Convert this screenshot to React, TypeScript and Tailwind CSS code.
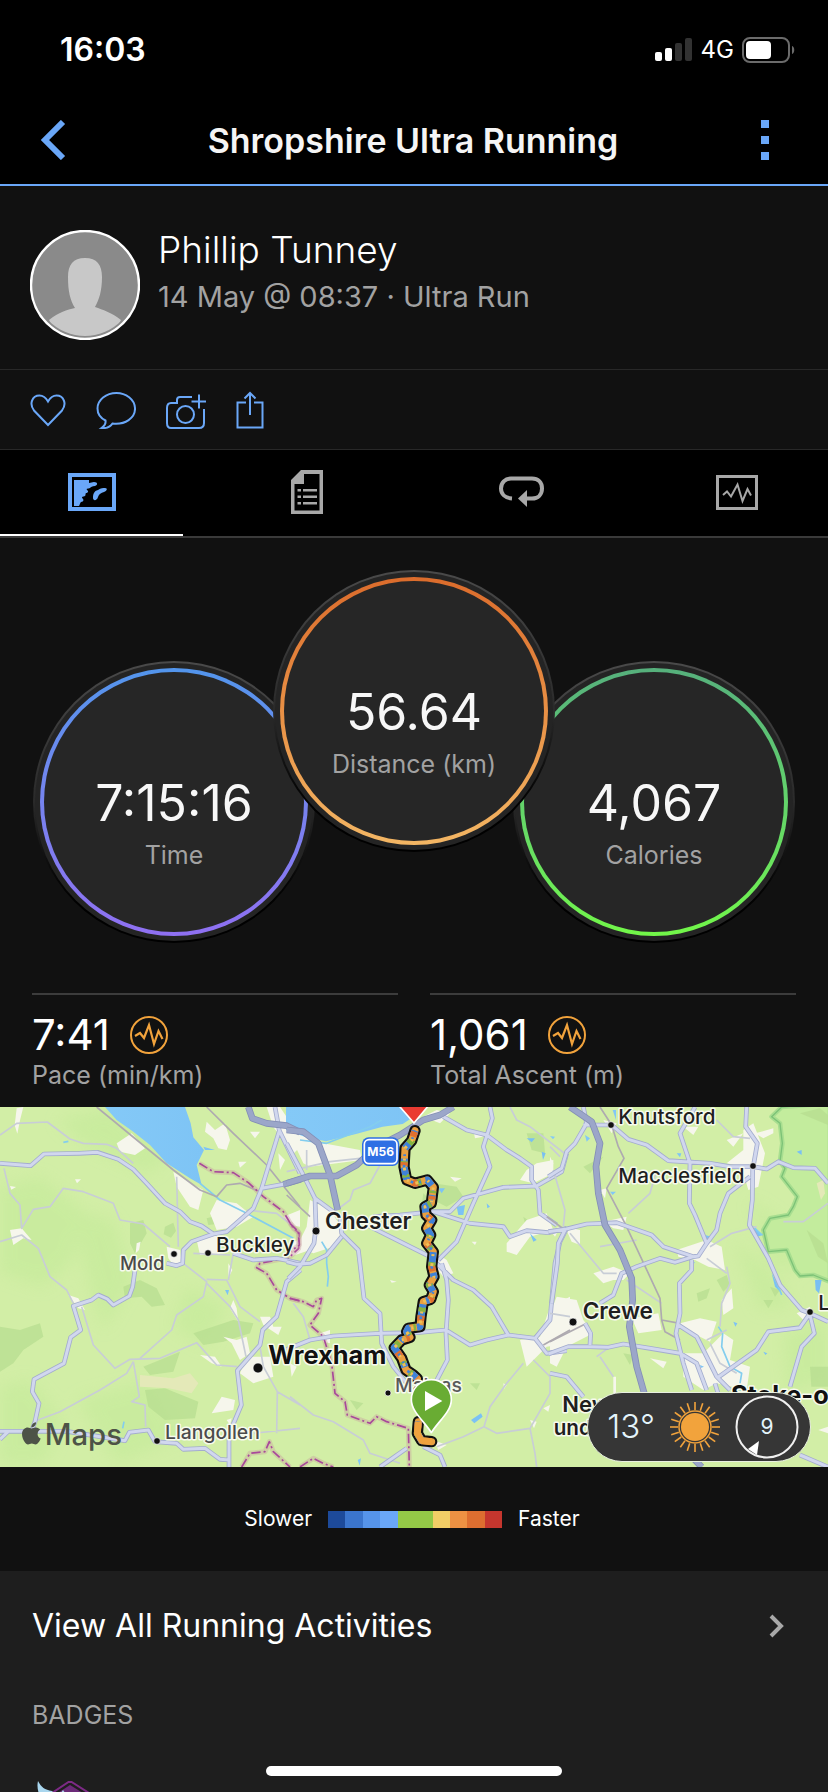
import type { ReactNode } from "react";
import { FaApple } from "react-icons/fa";

const ACCENT = "#6aa7f8";

function StatusBar() {
  return (
    <div className="flex h-[100px] items-center justify-between bg-black pr-8 pl-[60px]">
      <span className="text-[32px] font-semibold">16:03</span>
      <div className="flex items-center gap-2">
        <svg width="38" height="24" viewBox="0 0 38 24" fill="#fff">
          <rect x="0" y="14" width="7" height="9" rx="2" />
          <rect x="10" y="10" width="7" height="13" rx="2" />
          <rect x="20" y="5" width="7" height="18" rx="2" fill="#323232" />
          <rect x="30" y="0" width="7" height="23" rx="2" fill="#323232" />
        </svg>
        <span className="text-2xl">4G</span>
        <svg width="54" height="26" viewBox="0 0 54 26" fill="none">
          <rect x="1" y="1" width="46" height="24" rx="7" stroke="#6b6b6b" strokeWidth="2" />
          <rect x="4" y="4" width="25" height="18" rx="4" fill="#fff" />
          <path d="M50 9c3 1 3 7 0 8z" fill="#6b6b6b" />
        </svg>
      </div>
    </div>
  );
}

function NavBar() {
  return (
    <header className="flex h-[86px] items-center justify-between border-b-2 border-[#6aa7f8] bg-black pr-[58px] pb-1 pl-10">
      <button type="button" aria-label="Back">
        <svg width="26" height="40" viewBox="0 0 26 40" fill="none" stroke={ACCENT} strokeWidth="6">
          <path d="M23 2 5 20l18 18" />
        </svg>
      </button>
      <h1 className="text-[34px] font-semibold text-[#f5f5f5]">Shropshire Ultra Running</h1>
      <button type="button" aria-label="More options">
        <svg width="10" height="40" viewBox="0 0 10 40" fill={ACCENT}>
          <path d="M1 0h8v8H1zM1 16h8v8H1zM1 32h8v8H1z" />
        </svg>
      </button>
    </header>
  );
}

function Profile() {
  return (
    <section className="flex gap-[18px] border-b border-[#282828] px-[30px] pt-11 pb-[29px]">
      <svg className="shrink-0" width="110" height="110" viewBox="0 0 110 110">
        <defs>
          <clipPath id="avatar">
            <circle cx="55" cy="55" r="51" />
          </clipPath>
        </defs>
        <circle cx="55" cy="55" r="54" fill="#8a8a8a" stroke="#fff" strokeWidth="2.4" />
        <g clipPath="url(#avatar)" fill="#c8c8c8">
          <path d="M38 47c0-12 5-19 17-19s17 7 17 19c0 14-3 23-7 30 8 3 16 5 26 13l-10 20H29L19 90c10-8 18-10 26-12-5-8-7-17-7-31z" />
        </g>
      </svg>
      <div>
        <p className="text-[37px] leading-10 font-light text-white">Phillip Tunney</p>
        <p className="text-[29px] leading-[54px] text-[#a2a2a2]">14 May @ 08:37 · Ultra Run</p>
      </div>
    </section>
  );
}

function Actions() {
  return (
    <div className="flex h-20 items-center gap-[30px] border-b border-[#282828] px-[30px]">
      <button type="button" aria-label="Like">
        <svg width="36" height="38" viewBox="0 0 36 38" fill="none" stroke={ACCENT} strokeWidth="2">
          <path d="M18 34 4 19.500C-1 13 2 4.500 9.500 4.500c4 0 6.500 2.500 8.500 6 2-3.500 4.500-6 8.500-6C34 4.500 37 13 32 19.500z" />
        </svg>
      </button>
      <button type="button" aria-label="Comment">
        <svg width="40" height="38" viewBox="0 0 40 38" fill="none" stroke={ACCENT} strokeWidth="2">
          <path d="M20.500 2C10 2 1.500 9 1.500 17.500c0 5 3 9.500 8 12 .5 3-1 5.500-4 7.500 5 .5 9-1.500 11-4.500C29 34 39.500 27 39 17 38.500 8.500 30 2 20.500 2z" />
        </svg>
      </button>
      <button type="button" aria-label="Add photo">
        <svg width="40" height="38" viewBox="1 0 40 38" fill="none" stroke={ACCENT} strokeWidth="2">
          <path d="M27 6H15c-2 0-3 1-3 3v3H6c-3 0-4 2-4 5v15c0 3 1 5 4 5h28c3 0 5-2 5-5V18" />
          <circle cx="20.500" cy="23.500" r="8.500" />
          <path d="M34 3.500v14M26.500 10.500H41" />
        </svg>
      </button>
      <button type="button" aria-label="Share">
        <svg width="28" height="38" viewBox="0 0 28 38" fill="none" stroke={ACCENT} strokeWidth="2">
          <path d="M10 11.500H1.500v25h25v-25H18M14 24V2M8.500 7.500 14 2l5.500 5.500" />
        </svg>
      </button>
    </div>
  );
}

const tabs: { name: string; icon: ReactNode }[] = [
  {
    name: "Map",
    icon: (
      <svg width="48" height="38" viewBox="0 0 48 38" fill={ACCENT}>
        <rect x="2" y="2" width="44" height="34" fill="none" stroke={ACCENT} strokeWidth="4" />
        <path d="M6 7h15v3c2 0 3-1 5-1 4 0 4 3 1 4-3 0-4 1-5 2-2 1-4 0-3 2 2 1 1 3-1 3-1 1 0 2-1 3-2 1-3 0-3 2 2 1 2 4-1 4-1 1-1 2-2 4H6z" />
        <path d="M25 25c0-4 1-7 5-8 3-2 5-2 7-2 3 0 2 3-1 4-3 1-5 2-6 5-1 4-5 4-5 1z" />
      </svg>
    ),
  },
  {
    name: "Stats",
    icon: (
      <svg width="32" height="44" viewBox="0 0 32 44" fill="#a8a8a8">
        <path d="M10 0h22v44H0V10zm3 4v10H3.500v26.500h25V4z" fillRule="evenodd" />
        <path d="M12 19h14v2.500H12zM12 25.500h14V28H12zM12 32h14v2.500H12zM6.500 19H10v2.500H6.500zM6.500 25.500H10V28H6.500zM6.500 32H10v2.500H6.500z" />
      </svg>
    ),
  },
  {
    name: "Laps",
    icon: (
      <svg width="45" height="32" viewBox="0 0 45 32" fill="none">
        <path d="M13 22.500C6 22 2 18 2 12.500S6 2.500 12 2.500h21c6 0 10 4 10 10s-4 10-10 10h-5" stroke="#a8a8a8" strokeWidth="4" />
        <path d="M28 14v17l-9-8.500z" fill="#a8a8a8" />
      </svg>
    ),
  },
  {
    name: "Charts",
    icon: (
      <svg width="42" height="35" viewBox="0 0 42 35" fill="none" stroke="#a8a8a8">
        <rect x="1.500" y="1.500" width="39" height="32" strokeWidth="3" />
        <path d="m7 20 4-3.500 4 5 6.500-12 5 16.500 5-12 3.500 6.500" strokeWidth="2" />
      </svg>
    ),
  },
];

function Tabs() {
  return (
    <div role="tablist" className="grid h-[88px] grid-cols-4 gap-8 border-b-2 border-[#3a3a3a] bg-black">
      {tabs.map((tab, i) => (
        <button
          key={tab.name}
          type="button"
          role="tab"
          aria-label={tab.name}
          aria-selected={i === 0}
          className={`flex items-center justify-center border-b-2 ${i === 0 ? "border-white" : "border-transparent"}`}
        >
          {tab.icon}
        </button>
      ))}
    </div>
  );
}

function Dial({ value, label, ring, className }: { value: string; label: string; ring: string; className: string }) {
  return (
    <div className={`size-[282px] shrink-0 rounded-full bg-linear-to-b from-[#4a4a4a] via-[#2a2a2a] to-black p-0.5 ${className}`}>
      <div className="size-full rounded-full bg-[#242424] p-[5px]">
        <div className={`size-full rounded-full bg-linear-to-b p-1 ${ring}`}>
          <div className="flex size-full flex-col items-center rounded-full bg-[#262626] pt-[103px]">
            <span className="text-[50px] leading-14 text-[#f7f7f7]">{value}</span>
            <span className="text-[25px] leading-12 text-[#a2a2a2]">{label}</span>
          </div>
        </div>
      </div>
    </div>
  );
}

function Dials() {
  return (
    <section className="flex justify-center pt-8">
      <Dial value="7:15:16" label="Time" ring="from-[#5295ec] to-[#8f70f2]" className="mt-[91px]" />
      <Dial value="56.64" label="Distance (km)" ring="from-[#db6c2c] via-[#e89045] to-[#f3b664]" className="z-10 -mx-[42px]" />
      <Dial value="4,067" label="Calories" ring="from-[#56b07c] to-[#72f748]" className="mt-[91px]" />
    </section>
  );
}

function Stat({ value, label }: { value: string; label: string }) {
  return (
    <div className="border-t-2 border-[#3c3c3c] pt-4">
      <div className="flex h-12 items-center gap-5">
        <span className="text-[42px] leading-12 text-white">{value}</span>
        <svg width="38" height="38" viewBox="0 0 38 38" fill="none" stroke="#f2a33c">
          <circle cx="19" cy="19" r="18" strokeWidth="2" />
          <path d="m5 20 5-3 4 5 5-13 5 19 4.500-13 4 8" strokeWidth="2.200" />
        </svg>
      </div>
      <p className="text-[25px] leading-8 text-[#a2a2a2]">{label}</p>
    </div>
  );
}

// Map geometry is kept in three tiles that share one 2484x1080 canvas.
const tiles = [
  {
    x: 0,
    forest:
      "M0 680 60 690 120 670 130 710 70 750 40 790 0 815zM390 370l40-10 10 40-35 60-15-30zM370 560l50-20 50 25 25 50-40 5-30-30-50 5zM435 870l60-5 100 40-10 50-90 5-50-40zM430 800l110-45-20 60-70 10zM495 380l25-12 8 25-15 20-22-10zM580 700l120-40 60 10-10 30-80 25-60 10zM620 355l60-15-10 30-45 5z",
    sand: "M420 825l100 10 50-15 25 30-20 30-70-15-85-5z",
    towns:
      "M350 130l45-30 40 45-30 20-45-10zM520 215l45 30 45 25-15 60-25-10-40-60zM620 65l25 25 30-20 15 50-10 30-25-5-15-30-25-20zM650 300l60 10 50 40-50 30-60 10-20-50zM30 390l35-5 30 35-25-5-30 20zM205 585l30 10 20 35-20-5zM670 710l40 10 30-10 10 50-30 20-25-50zM780 650l30 0 10 30 25 0-10 25-45-30zM740 770l70 0 10 60-60 20-40-30zM635 940l30-50 40 10-5 30zM500 440l40 10 5 40-25 5-15-20zM600 765l45 5 20 30-30-10zM800 21h40l40 60 20 60-20 20-60-80zM850 350l50-20v50l-30-5zM590 420l60-15 10 60-60 0zM50 25l20-4-10 40-8 40-8-25zM410 430l12-5-5 25-10 10zM750 95l30 0-15 20zM715 185l25 0-20 18zM30 258l18 3-14 8zM225 238l18 0-12 12zM685 490l12 20-12 25zM700 600l10 25 5 40-25-40zM835 160l20 20-15 30zM680 960l15-5-5 20z",
    water:
      "M315 21 350 60 400 95 450 135 500 190 570 235 605 255 590 195 612 150 580 112 572 70 555 21zM610 140l35 10-30 0zM675 570l12 0-4 16zM860 21 900 75V21z",
    motorway: "M745 21 757 55 800 70 860 77 900 97M850 253 902 238",
    major:
      "M0 190 92 197 132 162 238 160 292 157 355 178 400 208 440 250 495 310 540 335 570 365 605 378 640 402 680 395 760 325 785 265 838 92 825 21M838 92 900 220M785 265 850 253M640 402 575 425 550 450 548 490 530 497 500 490M405 510 398 560 388 588 340 615 322 597 295 585 275 600 220 618 242 690 212 712 192 790 102 838 97 875 117 910 105 965 95 992M0 994H200L300 1010 375 1022 388 997 445 990 465 1025 530 1030 550 1048 615 1045 660 1078 687 1080M687 1101V1000L705 960 724 915 712 812 780 735 788 690 830 650 860 545 902 510M700 460 760 480 830 475 902 490M0 1018 25 994",
    minor:
      "M0 105 50 70 142 66 210 117 250 130 320 133 350 145 400 190M12 205 30 280 60 315 65 385 100 328 150 320 190 265 250 275 340 310 360 360 430 372 510 440M0 425 65 405 115 445 150 530 200 570 220 610M245 620 280 735 345 805 390 778 480 775 590 728 650 795 712 800M400 785 380 820 300 870 180 935 100 965M420 775 515 690 530 645 610 590 620 545 550 490M400 785 418 890 395 905 435 915 437 980M530 230 535 440M620 550 690 620 715 660 738 770M685 540 700 460M580 460 690 465M620 538 680 540 720 620 780 665M740 330 830 340 880 380M780 740 790 800 832 875 830 1000M832 875 900 915M760 1000 900 985",
    rail: "M290 21 520 210 600 270 650 290 680 255 720 250 780 275M620 21 700 100 800 195 900 320",
    border:
      "M598 190 640 215 700 218 745 248 790 290 850 335 880 385 898 400 896 445 860 480 840 478 780 490 770 503 800 520 830 570 870 595 900 603M725 1101 750 1060 795 1055 808 1025 820 1055 870 1101",
    river: "M600 250 660 300 740 340 880 415M372 965 368 985M190 127 205 124",
  },
  {
    x: 870,
    forest:
      "M430 250l70 10 20 30-50 30-40-20zM710 100l50 0 5 60-40-10zM700 350l40 30-30 10zM540 850l30 0-10 20zM60 110l30 30-20 50-30-20zM400 280l20 20-10 40-15-20zM180 900l40 10-20 20z",
    sand: "M385 1000l15 0-5 20z",
    towns:
      "M0 105 60 95 100 130 210 150 215 180 60 200 40 190zM60 300l60 30 40 60-30 50-60 20-50-20 30-60zM440 460l30 20 20 40-30 10-25-30zM650 430l60-70 60-20 20 50-70 20-40 55-30-10zM740 190l50-10 0 40-60 30-40-10 20-30zM780 620l60-30v140l-70 10-60 60-20-80 60-10zM90 700l30-10 0 40-20-5zM300 540l20 5-15 3zM480 230l35 5-20 10zM430 1020l40 15-25 15zM640 850l10 5-8 12zM720 960l20 5-8 20zM760 925l20-10-5 20zM0 430l50-20 10 40-60 20zM400 50l40-20 40 10-30 30zM550 90l30 20-25 5zM545 425l15 0-5 10zM0 790l20 10-15 30z",
    water:
      "M-12 21V90l60 22 60 12 90-22 80-22 60-8 60-40V21zM500 320l25-5-5 30-15 0zM710 115l25 0-10 12zM590 310l10 10-8 5zM445 265l20 0-10 15zM543 960l30-20 5 10-25 20zM720 400l20 20-10 5zM203 1080l10-5-4 22zM755 155l12 5-8 20z",
    motorway: "M-10 90 40 95 85 130 120 225 143 330M-10 250 60 228 140 228 200 195 260 140 330 105 400 60 450 45 490 21",
    major:
      "M-10 130 40 225 75 295 150 350 155 400 205 450 222 595 270 640 275 730 310 800 350 850M75 295 78 380 72 430 30 500-5 535M-10 485 20 493 60 490 110 465 155 410M230 375 300 410 420 470 450 500 490 540 550 570 605 620 655 705 735 715 770 760 830 752M250 350 330 345 430 335 480 335 520 295 640 262 740 258 815 215 830 160M430 335 540 370 640 380 660 410 710 392 775 398 830 385M600 21 607 55 580 140 600 200 550 310 500 425 445 480M460 50 530 90 590 105 650 150 690 175 725 200 725 240 745 270 750 340 800 375M455 490 470 540 475 600 468 700 472 780 430 860M-10 748 60 720 130 708 270 700 380 698 468 690 540 735 590 720 655 705M735 715 780 660 795 490 810 425 830 385M400 1040 450 1065 465 1101M270 1101 300 1080 350 1045",
    minor:
      "M-10 215 120 185 210 175 270 195 240 250 190 270 180 300 140 330M660 21 680 60 720 80 830 165M0 890 70 945 130 965 220 1020 240 1060 330 1090M440 1040 520 1010 582 980 600 920 650 850 700 790M582 980 620 1000 720 985 780 880 780 830 730 780M720 985 735 1060 740 1101M10 610 40 650 60 720M50 150 50 210",
    rail: "M-10 285 60 350M760 735 840 690",
    border:
      "M0 370 25 395 28 435 0 455M0 595 40 605 70 620 80 600 95 595 85 640 60 675 100 710 125 790 135 880 165 905 172 945 240 970 260 950 290 965 355 985 358 1101M30 1101 70 1075 100 1090 130 1101",
    river: "M95 425 110 450 110 490 115 530 112 560M275 60 240 80 110 130 30 120",
  },
  {
    x: 1650,
    forest:
      "M770 390l50 40 14 60-30-20zM440 580l40-15-10 30-25 10zM500 540l30-15 10 30-20 20zM750 40l60-15 24 20v30zM660 560l30 10-15 20zM220 760l30 5-10 30zM780 800l54 0v60l-50 0zM100 200l60-30-40 50zM640 600l30 0-15 25z",
    sand: "M800 250l20-10 5 40-12 20z",
    towns:
      "M380 450l90-30 45 20 10 70-50-10-40-20-50-10zM530 190l50-40 0-60 30-20 35 90-20 100-30 10-20-70zM160 365l70-15-10 40-30-5zM45 380l45 10 0 45-25-10zM130 520l60-20 50 20-20 20-30 0-30 10zM0 640l20-50 60 10 20 60 30 40-80 40-30 60-20-10zM515 600l30-35 5 60-30 20zM390 670l60-15 50 10-20 60-60-30zM400 760l60 0 60-60 30 20-10 60 60 20-10 70-90-20-40 20-60-40zM245 655l80-15 10 50-70 10zM740 640l40-20 10 40-30 0zM615 100l55-15 0 15-30 15zM400 80l45 0-15 25zM530 120l50-20-30 40zM0 390l30-10-15 30zM150 270l20-5-5 30zM590 450l10 60M300 775l50 10-10 20zM160 60l40 10-15 30zM190 830l8 0 0 60-8 0zM805 990l29-10v20zM0 170l10 20-10 40z",
    water:
      "M610 380l30 25-20 5zM665 520l30 60-20-20zM795 540l20 0-8 40-10-10zM380 160l14 0-4 12zM465 405l14 4-8 10zM188 30l10 0 0 30zM740 155l15-5 0 15zM550 665l12 5-6 10zM450 795l12 5-10 4zM0 108l15 2-6 8zM105 105l15 10-10 10zM180 275l18 0-10 10zM640 755l12 5-6 5zM420 485l15 2-8 10z",
    motorway: "M60 21 125 65 150 130 138 200 145 280 165 375 210 450 245 535 248 600 238 680 260 800 300 940 455 1101",
    major:
      "M-5 395 45 388 110 372 200 368 305 405 340 440 430 470 445 468 470 430 435 345 418 310 420 190 390 100 435 21M470 430 500 390 510 340 535 280 600 230M100 75 185 75 235 118 290 135 355 182 480 190 540 200 610 200 650 207 685 185 730 203 795 205 834 250M-5 230 35 205 50 155 75 130 110 70 100 21M590 21 587 80 622 130 608 210 607 300 598 375 655 475 690 555 755 630 780 640M430 470 375 487 330 475 260 500 215 520 190 585 150 610M425 480V510L388 550 390 640 378 700 400 790 425 870M385 675 440 710 470 770 500 830 540 870M-5 762 55 740 120 740 175 742 220 732 300 745 390 760 440 790 470 870M500 835 620 750 655 695 750 683 780 640 834 665M780 645 793 700 755 740 720 860M0 820 50 830 100 890M45 390 25 430 22 490 5 610M120 735 122 700 105 670M750 1065 834 1101M495 850 510 900",
    minor:
      "M0 140 30 170M10 210 45 330 40 380M60 400 160 520 200 520M500 60 550 110 600 115M700 365 760 365 834 310M530 500 540 550 515 610 510 680M470 475 530 520M150 770 190 830M140 770 180 740M545 400 620 380M480 440 545 400M230 540 335 610M235 340 300 280 320 210M0 640 60 650M480 730 510 790 560 820M150 440 260 420M470 720 530 690",
    rail: "M150 21 185 75 205 140 222 175 170 265 225 370 330 595 335 660 390 670M335 660 345 695 390 720M0 725 110 670M-10 350 45 390",
    border: "",
    river: "M505 680 518 700 515 740 540 800 575 820 570 850M670 520 695 585M610 380 635 405M550 865l25 5",
  },
];

const park =
  "M695 21 665 50 690 70 697 130 690 185 705 205 695 230 742 290 730 320 715 345 660 355 640 390 655 455 710 450 735 510 750 528 790 525 840 545V10z";

const route =
  "M375 92 365 122 345 145 342 200 350 240 375 250 412 240 430 262 424 310 405 320 408 345 425 360 410 385 422 405 410 430 430 455 425 500 432 530 418 555 430 575 422 598 400 605 393 650 390 680 355 685 350 695 360 712 335 720 313 743 335 775 348 810 370 825 382 836M385 965 382 1000 395 1022 425 1025";

const places = [
  { name: "Mold", x: 360, y: 509, size: 56, weight: 500, color: "#4b4b4b", dot: [522, 462, 10] },
  { name: "Buckley", x: 648, y: 457, size: 62, weight: 500, color: "#1f1f1f", dot: [624, 459, 10] },
  { name: "Llangollen", x: 495, y: 1018, size: 58, weight: 500, color: "#4b4b4b", dot: [471, 1023, 10] },
  { name: "Chester", x: 975, y: 387, size: 68, weight: 600, color: "#1f1f1f", dot: [948, 393, 12] },
  { name: "Wrexham", x: 805, y: 792, size: 76, weight: 700, color: "#111", dot: [774, 804, 15] },
  { name: "Malpas", x: 1185, y: 875, size: 58, weight: 500, color: "#5a5a5a", dot: [1164, 879, 9] },
  { name: "Knutsford", x: 1855, y: 71, size: 62, weight: 500, color: "#1f1f1f", dot: [1833, 75, 10] },
  { name: "Macclesfield", x: 1855, y: 248, size: 62, weight: 500, color: "#1f1f1f", dot: [2259, 198, 10] },
  { name: "Crewe", x: 1748, y: 657, size: 68, weight: 600, color: "#1f1f1f", dot: [1719, 666, 12] },
  { name: "Leek", x: 2455, y: 631, size: 62, weight: 500, color: "#1f1f1f", dot: [2430, 636, 10] },
  { name: "New", x: 1687, y: 935, size: 66, weight: 600, color: "#1f1f1f" },
  { name: "und", x: 1661, y: 1006, size: 62, weight: 600, color: "#1f1f1f" },
  { name: "Stoke-on", x: 2193, y: 912, size: 76, weight: 700, color: "#111" },
];

function ActivityMap() {
  return (
    <svg
      className="block h-[360px] w-full"
      viewBox="0 21 2484 1080"
      preserveAspectRatio="xMidYMid slice"
      strokeLinejoin="round"
      fill="none"
    >
      <defs>
        <linearGradient id="sea" x1="0" y1="0" x2="1" y2="0">
          <stop offset="0" stopColor="#84c9f7" />
          <stop offset="1" stopColor="#78bff3" />
        </linearGradient>
        <filter id="soft">
          <feGaussianBlur stdDeviation="22" />
        </filter>
      </defs>
      <rect y="21" width="2484" height="1080" fill="#d2eea6" />
      <g fill="#c6eb9b" filter="url(#soft)" opacity=".7">
        <path d="M0 260 120 230 250 330 220 480 130 560 0 520zM220 330l120 30 60 180-90 150-60-200zM0 860l90-20 100 120-60 130H0zM230 900l220-60 100 170-200 80zM330 21l-160 40 80 70 200 90 60-60zM560 560l120 60-60 120-100-60zM2250 300l90 60 60 160-90-30zM2200 420l120 100 60 100-100 10zM2350 700l134-40v180l-120 40z" />
      </g>
      {tiles.map((t) => (
        <g key={t.x} transform={`translate(${t.x} 0)`}>
          {t.x === 1650 && (
            <>
              <path d={park} fill="#c3ec9d" stroke="#a8de90" strokeWidth="14" />
              <path d={park} stroke="#7cc277" strokeWidth="4" />
            </>
          )}
          <path d={t.forest} fill="#b7dd90" opacity=".75" />
          <path d={t.sand} fill="#e4e9b8" />
          <path d={t.towns} fill="#f6f6ec" />
          <path d={t.water} fill="url(#sea)" />
          <path d={t.river} stroke="#83cdee" strokeWidth="5" />
        </g>
      ))}
      {tiles.map((t) => (
        <g key={t.x} transform={`translate(${t.x} 0)`}>
          <path d={t.minor} stroke="#c8cdd6" strokeWidth="5" />
          <path d={t.rail} stroke="#aeaab0" strokeWidth="5" />
          <path d={t.border} stroke="#c9a0a0" strokeOpacity=".4" strokeWidth="15" />
          <path d={t.border} stroke="#a8489a" strokeWidth="5" strokeDasharray="28 9 6 9" />
          <path d={t.major} stroke="#a3acce" strokeWidth="14" />
          <path d={t.major} stroke="#d1d7ee" strokeWidth="9" />
          <path d={t.motorway} stroke="#848fb6" strokeWidth="20" />
          <path d={t.motorway} stroke="#9ba6c9" strokeWidth="15" />
        </g>
      ))}

      <g transform="translate(1086 112)">
        <rect width="112" height="86" rx="20" fill="#2f6fe4" />
        <rect x="7" y="7" width="98" height="72" rx="14" stroke="#fff" strokeWidth="5" />
        <text x="56" y="56" textAnchor="middle" fontSize="36" fontWeight="700" fill="#fff">
          M56
        </text>
      </g>

      {/* pace coloured track */}
      <g transform="translate(870 0)" strokeLinecap="round">
        <path d={route} stroke="#111" strokeWidth="34" />
        <path d={route} stroke="#e9a041" strokeWidth="21" />
        <g strokeLinecap="butt" strokeWidth="21">
          <path d={route} stroke="#3f82d8" strokeDasharray="14 22 26 31 9 17 38 25" />
          <path d={route} stroke="#86b43f" strokeDasharray="9 41 14 57 7 33" strokeDashoffset="20" />
          <path d={route} stroke="#e0702f" strokeDasharray="10 63 16 85" strokeDashoffset="70" />
          <path d={route} stroke="#3f82d8" strokeWidth="8" strokeDasharray="8 19 5 27" strokeDashoffset="6" />
          <path d={route} stroke="#efbf55" strokeWidth="9" strokeDasharray="9 30 6 21" strokeDashoffset="12" />
          <path d="M385 965 382 1000 395 1022 425 1025" stroke="#f0a23e" strokeWidth="20" />
        </g>
        <path d="M325 15h92l-45 54z" fill="#ea3b32" stroke="#fff" strokeWidth="5" />
      </g>

      {places.map((p) => (
        <g key={p.name}>
          <text
            x={p.x}
            y={p.y}
            fontSize={p.size}
            fontWeight={p.weight}
            fill={p.color}
            stroke="#f7faee"
            strokeWidth="9"
            paintOrder="stroke"
          >
            {p.name}
          </text>
          {p.dot && <circle cx={p.dot[0]} cy={p.dot[1]} r={p.dot[2]} fill="#111" stroke="#fff" strokeWidth="2" />}
        </g>
      ))}

      <g transform="translate(870 0)">
        <path d="M424 998C404 965 364 935 364 899a60 60 0 0 1 120 0c0 36-40 66-60 99z" fill="#69ac33" stroke="#fff" strokeWidth="5" />
        <path d="M405 873v60l52-30z" fill="#fff" />
      </g>

      <FaApple x="56" y="962" size={76} color="#4d5347" />
      <text x="134" y="1035" fontSize="88" fontWeight="500" fill="#4d5347">
        Maps
      </text>
    </svg>
  );
}

function Weather() {
  return (
    <div className="absolute right-[17px] bottom-[5px] flex h-[70px] items-center rounded-full border border-[#e8efe0] bg-[#363636] pr-[11px] pl-[19px]">
      <span className="text-[33px] font-light text-[#e4f4fb]">13°</span>
      <svg className="ml-[14px]" width="52" height="52" viewBox="-26 -26 52 52" stroke="#f2a33c">
        <circle r="14" fill="#f2a33c" stroke="none" />
        <circle r="16" fill="none" strokeWidth="1.500" />
        {Array.from({ length: 20 }, (_, i) => (
          <path key={i} d="M0-17V-25" strokeWidth="1.600" transform={`rotate(${i * 18})`} />
        ))}
      </svg>
      <div className="relative ml-[14px] flex size-[64px] items-center justify-center">
        <svg className="absolute inset-0" width="64" height="64" viewBox="-32 -32 64 64">
          <circle r="30.500" fill="none" stroke="#f0f0f0" strokeWidth="2" />
          <path d="M-8 14-10 28-19 22z" fill="#fff" />
        </svg>
        <span className="text-[21px] text-[#e4f4fb]">9</span>
      </div>
    </div>
  );
}

const paceScale = [
  "bg-[#1d4a9a]",
  "bg-[#3b75cd]",
  "bg-[#5694ea]",
  "bg-[#6aa7f8]",
  "bg-[#94c947]",
  "bg-[#94c947]",
  "bg-[#f2ce66]",
  "bg-[#ed9143]",
  "bg-[#dd6e30]",
  "bg-[#c5362e]",
];

function PaceLegend() {
  return (
    <div className="flex h-[104px] items-center justify-center gap-4 pr-1 text-[21px] text-white">
      <span>Slower</span>
      <div className="flex h-[17px] w-[174px]">
        {paceScale.map((color, i) => (
          <span key={i} className={`flex-1 ${color}`} />
        ))}
      </div>
      <span>Faster</span>
    </div>
  );
}

export default function App() {
  return (
    <div className="relative h-screen overflow-hidden bg-[#111] font-[Inter,sans-serif] text-white">
      <StatusBar />
      <NavBar />
      <Profile />
      <Actions />
      <Tabs />
      <Dials />
      <section className="mt-[50px] grid grid-cols-2 gap-8 px-8 pb-4">
        <Stat value="7:41" label="Pace (min/km)" />
        <Stat value="1,061" label="Total Ascent (m)" />
      </section>
      <div className="relative">
        <ActivityMap />
        <Weather />
      </div>
      <PaceLegend />
      <section className="bg-[#1e1e1e] px-8">
        <a href="#activities" className="flex h-[110px] items-center justify-between pr-3">
          <span className="text-[32px]">View All Running Activities</span>
          <svg width="15" height="24" viewBox="0 0 15 24" fill="none" stroke="#a8a8a8" strokeWidth="4">
            <path d="m2 2 10 10L2 22" />
          </svg>
        </a>
        <h2 className="pt-[18px] text-[25px] leading-8 text-[#a2a2a2]">BADGES</h2>
        <svg className="mt-[50px]" width="80" height="80" viewBox="0 0 80 80">
          <path d="m38 0 38 24v38L38 80 2 62V24z" fill="#1e1e1e" stroke="#7d2a86" strokeWidth="2" />
          <path d="m38 4 34 21v35L38 76 6 60V25z" fill="#6b2a78" />
          <path d="M6 0c3 6 7 9 14 10l6 6 5-7 5 7v10H14C8 18 4 8 6 0z" fill="#a9d6ee" />
        </svg>
      </section>
      <div className="absolute bottom-4 left-1/2 h-[10px] w-[296px] -translate-x-1/2 rounded-full bg-white" />
    </div>
  );
}
